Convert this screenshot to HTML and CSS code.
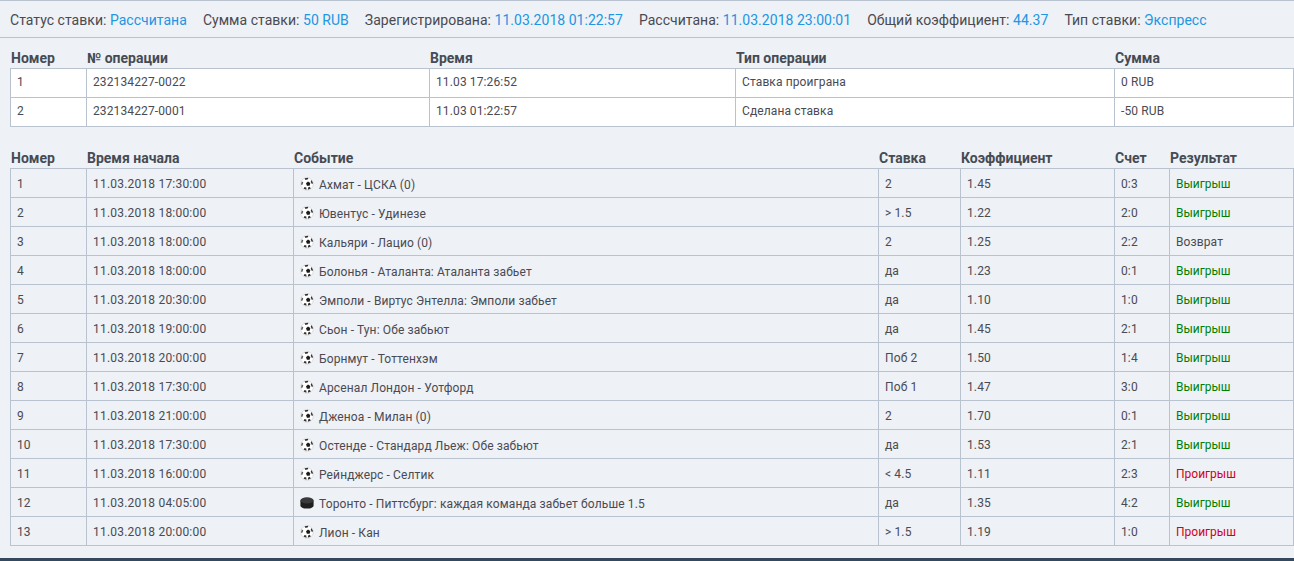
FILE: index.html
```html
<!DOCTYPE html>
<html lang="ru">
<head>
<meta charset="utf-8">
<title>Ставка</title>
<link rel="stylesheet" href="styles.css">
</head>
<body>
<svg class="defs" width="0" height="0" aria-hidden="true">
  <symbol id="ball" viewBox="0 0 14 14">
    <circle cx="7" cy="7" r="6.3" fill="#fff" stroke="#c4c4c4" stroke-width=".5"/>
    <path d="M8 4.6l2.3 1.5-.7 2.7H6.9l-.9-2.6z" fill="#1a1a1a"/>
    <path d="M4.6 1.2l3.6-.4-.2 1.5-2.6.7z" fill="#333"/>
    <path d="M11.6 3l1.5 3.2-1.2.9-1.2-2.4z" fill="#333"/>
    <path d="M1.8 4.2L1 7.4l1.2.7 1.1-2.5z" fill="#555"/>
    <path d="M3.6 11.8l.9-1.8 1.8.5.2 2.3z" fill="#333"/>
    <path d="M10.9 11.4l-1.2-1.6-1.6.7-.2 2.3z" fill="#333"/>
  </symbol>
  <symbol id="puck" viewBox="0 0 14 14">
    <path d="M.4 4.4v5c0 1.9 3 3.2 6.6 3.2s6.6-1.3 6.6-3.2v-5z" fill="#1f1f1f"/>
    <ellipse cx="7" cy="4.4" rx="6.6" ry="3.1" fill="#3a3a3a"/>
  </symbol>
</svg>
<main class="page">
  <section class="summary">
    <span class="item">Статус ставки: <b>Рассчитана</b></span>
    <span class="item">Сумма ставки: <b>50 RUB</b></span>
    <span class="item">Зарегистрирована: <b>11.03.2018 01:22:57</b></span>
    <span class="item">Рассчитана: <b>11.03.2018 23:00:01</b></span>
    <span class="item">Общий коэффициент: <b>44.37</b></span>
    <span class="item">Тип ставки: <b>Экспресс</b></span>
  </section>

  <table class="grid ops">
    <colgroup>
      <col class="c-num"><col class="c-op"><col class="c-time"><col class="c-type"><col>
    </colgroup>
    <thead>
      <tr><th>Номер</th><th>№ операции</th><th>Время</th><th>Тип операции</th><th>Сумма</th></tr>
    </thead>
    <tbody>
      <tr><td>1</td><td>232134227-0022</td><td>11.03 17:26:52</td><td>Ставка проиграна</td><td>0 RUB</td></tr>
      <tr><td>2</td><td>232134227-0001</td><td>11.03 01:22:57</td><td>Сделана ставка</td><td>-50 RUB</td></tr>
    </tbody>
  </table>

  <table class="grid events">
    <colgroup>
      <col class="c-num"><col class="c-start"><col class="c-event"><col class="c-bet"><col class="c-odds"><col class="c-score"><col>
    </colgroup>
    <thead>
      <tr><th>Номер</th><th>Время начала</th><th>Событие</th><th>Ставка</th><th>Коэффициент</th><th>Счет</th><th>Результат</th></tr>
    </thead>
    <tbody>
      <tr><td>1</td><td>11.03.2018 17:30:00</td><td><svg class="ico"><use href="#ball"/></svg>Ахмат - ЦСКА (0)</td><td>2</td><td>1.45</td><td>0:3</td><td class="win">Выигрыш</td></tr>
      <tr><td>2</td><td>11.03.2018 18:00:00</td><td><svg class="ico"><use href="#ball"/></svg>Ювентус - Удинезе</td><td>&gt; 1.5</td><td>1.22</td><td>2:0</td><td class="win">Выигрыш</td></tr>
      <tr><td>3</td><td>11.03.2018 18:00:00</td><td><svg class="ico"><use href="#ball"/></svg>Кальяри - Лацио (0)</td><td>2</td><td>1.25</td><td>2:2</td><td>Возврат</td></tr>
      <tr><td>4</td><td>11.03.2018 18:00:00</td><td><svg class="ico"><use href="#ball"/></svg>Болонья - Аталанта: Аталанта забьет</td><td>да</td><td>1.23</td><td>0:1</td><td class="win">Выигрыш</td></tr>
      <tr><td>5</td><td>11.03.2018 20:30:00</td><td><svg class="ico"><use href="#ball"/></svg>Эмполи - Виртус Энтелла: Эмполи забьет</td><td>да</td><td>1.10</td><td>1:0</td><td class="win">Выигрыш</td></tr>
      <tr><td>6</td><td>11.03.2018 19:00:00</td><td><svg class="ico"><use href="#ball"/></svg>Сьон - Тун: Обе забьют</td><td>да</td><td>1.45</td><td>2:1</td><td class="win">Выигрыш</td></tr>
      <tr><td>7</td><td>11.03.2018 20:00:00</td><td><svg class="ico"><use href="#ball"/></svg>Борнмут - Тоттенхэм</td><td>Поб 2</td><td>1.50</td><td>1:4</td><td class="win">Выигрыш</td></tr>
      <tr><td>8</td><td>11.03.2018 17:30:00</td><td><svg class="ico"><use href="#ball"/></svg>Арсенал Лондон - Уотфорд</td><td>Поб 1</td><td>1.47</td><td>3:0</td><td class="win">Выигрыш</td></tr>
      <tr><td>9</td><td>11.03.2018 21:00:00</td><td><svg class="ico"><use href="#ball"/></svg>Дженоа - Милан (0)</td><td>2</td><td>1.70</td><td>0:1</td><td class="win">Выигрыш</td></tr>
      <tr><td>10</td><td>11.03.2018 17:30:00</td><td><svg class="ico"><use href="#ball"/></svg>Остенде - Стандард Льеж: Обе забьют</td><td>да</td><td>1.53</td><td>2:1</td><td class="win">Выигрыш</td></tr>
      <tr><td>11</td><td>11.03.2018 16:00:00</td><td><svg class="ico"><use href="#ball"/></svg>Рейнджерс - Селтик</td><td>&lt; 4.5</td><td>1.11</td><td>2:3</td><td class="lose">Проигрыш</td></tr>
      <tr><td>12</td><td>11.03.2018 04:05:00</td><td><svg class="ico"><use href="#puck"/></svg>Торонто - Питтсбург: каждая команда забьет больше 1.5</td><td>да</td><td>1.35</td><td>4:2</td><td class="win">Выигрыш</td></tr>
      <tr><td>13</td><td>11.03.2018 20:00:00</td><td><svg class="ico"><use href="#ball"/></svg>Лион - Кан</td><td>&gt; 1.5</td><td>1.19</td><td>1:0</td><td class="lose">Проигрыш</td></tr>
    </tbody>
  </table>
</main>
<div class="footer-bar"></div>
</body>
</html>
```
FILE: styles.css
```css
html, body {
  margin: 0;
  padding: 0;
  height: 561px;
  overflow: hidden;
}
body {
  background: #eef1f5;
  color: #4a4a52;
  font-family: Roboto, "Liberation Sans", sans-serif;
  font-size: 12px;
  display: flex;
  flex-direction: column;
}
.defs { position: absolute; }
.page { flex: 1; min-height: 0; }
.summary {
  display: flex;
  gap: 16px;
  height: 34px;
  padding-top: 2px;
  align-items: center;
  padding-left: 10px;
  border-top: 1px solid #b9c3cf;
  border-bottom: 1px solid #b9c3cf;
  font-size: 14px;
  letter-spacing: .03px;
  white-space: nowrap;
}
.summary b { font-weight: 400; color: #2196e3; }
.grid {
  table-layout: fixed;
  border-collapse: collapse;
  width: 1284px;
  margin-left: 10px;
}
.ops { margin-top: 12px; }
.events { margin-top: 23px; }
.grid th {
  height: 16px;
  padding: 0 0 2px .5px;
  text-align: left;
  font-size: 14px;
  font-weight: 700;
  color: #454b54;
  vertical-align: bottom;
  line-height: 16px;
  white-space: nowrap;
}
.grid td {
  height: 26px;
  padding: 2px 5px 0 6px;
  border: 1px solid #b9c3cf;
  letter-spacing: .12px;
  white-space: nowrap;
  vertical-align: middle;
}
.ops tbody { background: #fff; }
.ops td { padding: 0 5px 2px 6px; }
.events td:nth-child(2) { letter-spacing: .2px; }
.c-num { width: 76px; }
.c-op { width: 343px; }
.c-time { width: 306px; }
.c-type { width: 379px; }
.c-start { width: 207px; }
.c-event { width: 585px; }
.c-bet { width: 82px; }
.c-odds { width: 154px; }
.c-score { width: 55px; }
.ico {
  width: 14px;
  height: 14px;
  margin-right: 5px;
  vertical-align: -2px;
}
.grid .win { color: #008000; letter-spacing: 0; }
.grid .lose { color: #d0021b; letter-spacing: 0; }
.footer-bar {
  height: 3px;
  background: #34495e;
  flex: none;
}
```
